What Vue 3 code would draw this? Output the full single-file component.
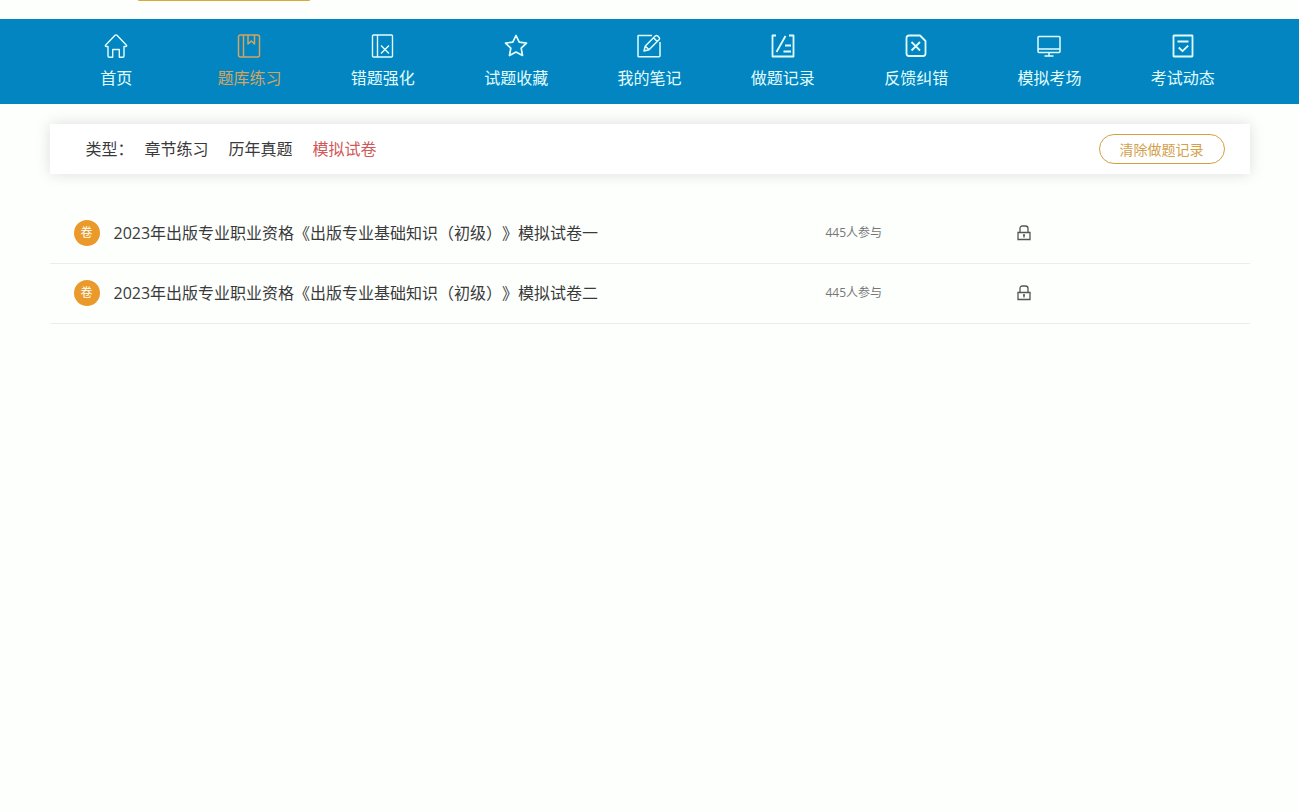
<script setup>
import { ref } from 'vue'

const current = ref('题库练习')
const navItems = [
  { label: '首页', width: 1.4, paths: ['M1.5 11.2 10.8 1.4q1.2-1 2.4 0l9.3 9.8q.6 1.3-1 1.3H20V22q0 1.3-1.3 1.3h-3.4V15.5H8.7v7.8H5.3Q4 23.300 4 22v-9.500H2.500q-1.600 0-1-1.300Z'] },
  { label: '题库练习', width: 1.5, paths: ['M3.500 1h17q2 0 2 2v18q0 2-2 2h-17q-2 0-2-2V3q0-2 2-2ZM6.500 1v22M11 1v9l3.300-3 3.200 3V1'] },
  { label: '错题强化', width: 1.4, paths: ['M2.500 1h18q1 0 1 1v20q0 1-1 1h-18q-1 0-1-1V2q0-1 1-1ZM6.500 1v22M10 11.500l8 8M18 11.500l-8 8'] },
  { label: '试题收藏', width: 1.7, paths: ['M12 1.500l3.200 6.600 7.300 1-5.300 5.100 1.300 7.300L12 18l-6.500 3.500 1.300-7.300L1.500 9.100l7.300-1Z'] },
  { label: '我的笔记', width: 1.5, paths: ['M15 1.500H1.500Q1 1.500 1 2v20q0 .800.800.800H22q1 0 1-1V8', 'M7 17l1.300-5L18.500 1.800q1-.800 2 0l1.700 1.700q.800 1 0 2L12 15.700ZM16.500 3.800l3.700 3.700M8.300 12l3.700 3.700'] },
  { label: '做题记录', width: 1.8, paths: ['M5 1.500H1.500V22.500H22.500V1.500H18M14.500 2 5.500 18M14 11.500h6M12.500 17.500H20'] },
  { label: '反馈纠错', width: 1.8, paths: ['M5 1.500h11l5.500 5.500v12.500q0 2.500-2.500 2.500H5q-2.500 0-2.500-2.500V4Q2.500 1.500 5 1.500Z', 'M7.500 8l8.500 8.500M16 8l-8.500 8.500'] },
  { label: '模拟考场', width: 1.5, paths: ['M2 2.500h20q1 0 1 1v14q0 1-1 1H2q-1 0-1-1v-14q0-1 1-1ZM1 15h22M12 18.500v3.500M7.500 22h9'] },
  { label: '考试动态', width: 1.8, paths: ['M3 1.500h18q.500 0 .500.500v20q0 .500-.500.500H3q-.500 0-.500-.500V2q0-.500.500-.500ZM6.500 7.500h11M7.800 13.500l3.700 3.700 5.700-5.500'] }
]

const types = ['章节练习', '历年真题', '模拟试卷']
const activeType = ref('模拟试卷')

const papers = [
  { title: '2023年出版专业职业资格《出版专业基础知识（初级）》模拟试卷一', joined: 445 },
  { title: '2023年出版专业职业资格《出版专业基础知识（初级）》模拟试卷二', joined: 445 }
]
</script>

<template>
  <div class="page">
    <header class="top"><div class="container"><div class="tab-edge"></div></div></header>

    <nav class="nav">
      <div class="container nav-list">
        <a
          v-for="item in navItems"
          :key="item.label"
          href="#"
          class="nav-item"
          :class="{ active: item.label === current }"
          @click.prevent="current = item.label"
        >
          <svg class="nav-icon" viewBox="0 0 24 24" :stroke-width="item.width" aria-hidden="true">
            <path v-for="d in item.paths" :key="d" :d="d" />
          </svg>
          <span>{{ item.label }}</span>
        </a>
      </div>
    </nav>

    <main class="container">
      <section class="filter">
        <span class="filter-label">类型：</span>
        <div class="filter-types">
          <a
            v-for="type in types"
            :key="type"
            href="#"
            class="type"
            :class="{ active: type === activeType }"
            @click.prevent="activeType = type"
          >{{ type }}</a>
        </div>
        <button type="button" class="clear">清除做题记录</button>
      </section>

      <ul class="papers">
        <li v-for="paper in papers" :key="paper.title" class="paper">
          <span class="badge">卷</span>
          <a href="#" class="title" @click.prevent>{{ paper.title }}</a>
          <span class="joined">{{ paper.joined }}人参与</span>
          <span class="state">
            <svg class="lock" viewBox="0 0 14 16" role="img" aria-label="未解锁">
              <path d="M3 7V3.500Q3 1 5.500 1h3Q11 1 11 3.500V7M1 7.500h12v7H1ZM6 10h2M7 10v2.500" />
            </svg>
          </span>
        </li>
      </ul>
    </main>
  </div>
</template>

<style>
body {
  margin: 0;
  background: #fdfffd;
}
</style>

<style scoped>
.page {
  font-family: "Open Sans", "Noto Sans CJK SC", sans-serif;
  font-size: 16px;
  line-height: 24px;
  color: #3a3a3a;
  text-spacing-trim: space-all;
}

a {
  color: inherit;
  text-decoration: none;
}

.container {
  width: 100%;
  max-width: 1200px;
  margin: 0 auto;
}

.top {
  height: 19px;
}

.tab-edge {
  width: 172px;
  height: 1px;
  margin-left: 88px;
  border-radius: 0 0 4px 4px;
  background: #d9a93c;
}

.nav {
  background: #0285c1;
  color: #e2ffff;
}

.nav-list {
  display: grid;
  grid-template-columns: repeat(9, 1fr);
}

.nav-item {
  display: flex;
  flex-direction: column;
  align-items: center;
  gap: 8px;
  padding: 15px 0 14px;
}

.nav-item.active {
  color: #d3a561;
}

.nav-icon {
  width: 24px;
  height: 24px;
  fill: none;
  stroke: currentColor;
  stroke-linejoin: round;
}

.filter {
  display: flex;
  align-items: center;
  height: 50px;
  margin-top: 20px;
  padding: 0 25px 0 36px;
  box-sizing: border-box;
  background: #fff;
  box-shadow: 0 0 14px rgba(0, 0, 0, 0.13);
}

.filter-label {
  margin-right: 11px;
}

.filter-types {
  display: flex;
  gap: 20px;
}

.type.active {
  color: #d05858;
}

.clear {
  width: 126px;
  height: 30px;
  margin-left: auto;
  padding: 2px 0 0;
  border: 1px solid #d3a040;
  border-radius: 15px;
  background: none;
  color: #d3a04c;
  font: inherit;
  font-size: 14px;
  line-height: 26px;
}

.papers {
  margin: 30px 0 0;
  padding: 0;
  list-style: none;
}

.paper {
  display: grid;
  grid-template-columns: 26px 1fr 191px 233px;
  align-items: center;
  height: 60px;
  padding: 0 0 1px 24px;
  box-sizing: border-box;
  border-bottom: 1px solid #ececec;
}

.badge {
  width: 26px;
  height: 26px;
  border-radius: 50%;
  background: #ea9a2a;
  color: #fff;
  font-size: 12px;
  line-height: 26px;
  text-align: center;
}

.title {
  padding-left: 14px;
}

.joined {
  color: #777;
  font-size: 12px;
}

.state {
  display: flex;
}

.lock {
  width: 14px;
  height: 16px;
  fill: none;
  stroke: #555;
  stroke-width: 1.3;
}
</style>
